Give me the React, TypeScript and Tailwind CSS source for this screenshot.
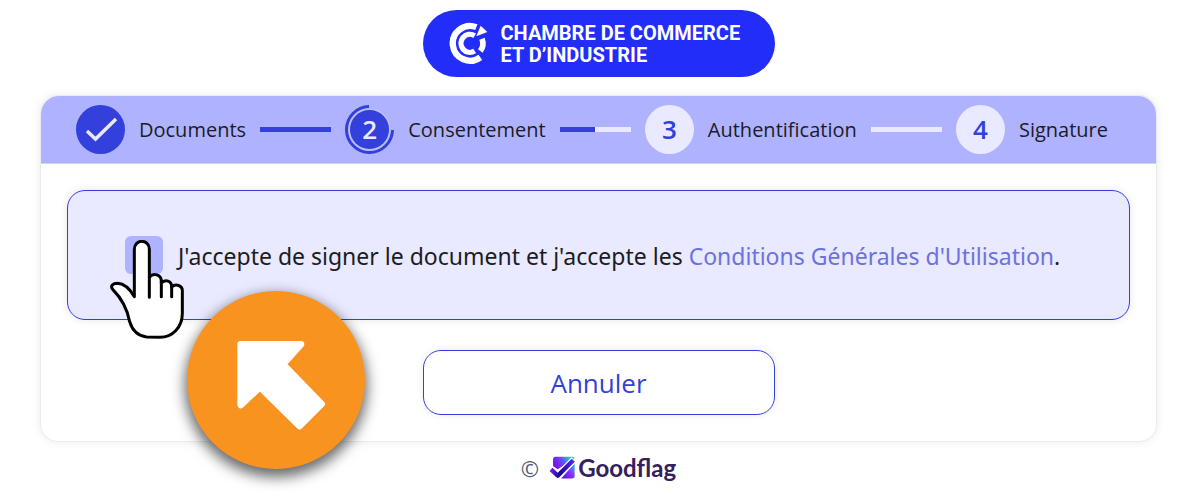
import React from "react";

function CciLogo() {
  return (
    <svg viewBox="9 0 120 144" className="h-12 w-10 shrink-0" aria-hidden="true">
      <g fill="none" stroke="#ffffff">
        <path d="M91 21.500A52 52 0 1 0 103 112" strokeWidth="19" />
        <path d="M86 47A27 27 0 1 0 86 93" strokeWidth="16" />
        <path d="M108 56A39 39 0 0 1 103 93" strokeWidth="17" />
      </g>
      <path d="M104 17L124 36L91 49Z" fill="#ffffff" />
    </svg>
  );
}

function GoodflagMark() {
  return (
    <svg viewBox="118 52 80 70" className="h-6 w-[27px] shrink-0" aria-hidden="true">
      <defs>
        <linearGradient id="flag" x1="0" y1="0.3" x2="1" y2="0">
          <stop offset="0" stopColor="#7a12ee" />
          <stop offset="0.4" stopColor="#6a4cf5" />
          <stop offset="0.8" stopColor="#16d3e0" />
        </linearGradient>
        <linearGradient id="flagEnd" x1="0" y1="1" x2="1" y2="0">
          <stop offset="0" stopColor="#4a18c8" />
          <stop offset="0.5" stopColor="#8a2cff" />
          <stop offset="1" stopColor="#20c8ee" />
        </linearGradient>
        <linearGradient id="tick" x1="0" y1="0" x2="1" y2="0">
          <stop offset="0" stopColor="#7417ee" />
          <stop offset="0.4" stopColor="#1a058c" />
          <stop offset="1" stopColor="#5a25ee" />
        </linearGradient>
      </defs>
      <path d="M138 54H188Q195 54 192 60L144 91L130 82V62Q130 54 138 54Z" fill="url(#flag)" />
      <path d="M194 72V110Q194 118 186 118H154Z" fill="url(#flagEnd)" />
      <path d="M124 91L144 110L192 62" fill="none" stroke="#ffffff" strokeWidth="20" />
      <path d="M124 91L144 110L190 64" fill="none" stroke="url(#tick)" strokeWidth="13" strokeLinejoin="round" />
    </svg>
  );
}

function PointingHand() {
  return (
    <svg viewBox="150 180 222 300" className="pointer-events-none absolute top-1 -left-[15px] h-[100px] w-[74px] max-w-none" aria-hidden="true">
      <path
        d="M223 350V208C223 176 268 176 268 208V292C280 278 304 282 304 304V309C316 297 335 302 335 321C347 310 367 316 367 332V400C367 442 338 472 300 472L260 471C232 468 216 448 209 425C202 387 184 354 158 328C150 318 158 310 173 310C194 311 209 326 223 350Z"
        fill="#ffffff"
        stroke="#000000"
        strokeWidth="9"
        strokeLinejoin="round"
      />
      <path d="M268 290V352M304 304V350M335 321V350" fill="none" stroke="#000000" strokeWidth="9" strokeLinecap="round" />
    </svg>
  );
}

function ArrowBadge() {
  return (
    <div className="pointer-events-none absolute top-[55px] left-[62px] size-[178px] rounded-full bg-[#f8931f] shadow-[0_6px_14px_2px_rgba(0,0,0,0.6)]">
      <svg viewBox="50 33 534 534" className="size-full" aria-hidden="true">
        <path
          d="M211 193H392L338 253L454 372L388 438L269 321L211 375Z"
          fill="#ffffff"
          stroke="#ffffff"
          strokeWidth="20"
          strokeLinejoin="round"
        />
      </svg>
    </div>
  );
}

function StepIcon({ step }: { step: number }) {
  if (step === 1) {
    return (
      <span className="flex size-[49px] shrink-0 items-center justify-center rounded-full bg-[#3340dc]">
        <svg viewBox="0 0 49 49" className="size-full" aria-hidden="true">
          <path d="M11 26L19.500 34L40 14" fill="none" stroke="#e9e9ff" strokeWidth="3.500" />
        </svg>
      </span>
    );
  }
  if (step === 2) {
    return (
      <span className="grid size-[49px] shrink-0 place-items-center">
        <svg viewBox="0 0 49 49" className="col-start-1 row-start-1 size-full" aria-hidden="true">
          <path d="M24 1.500A23 23 0 1 0 47.500 25" fill="none" stroke="#3340dc" strokeWidth="3" />
          <circle cx="24.500" cy="24.500" r="20.500" fill="none" stroke="#c4c6fd" strokeWidth="1" />
          <circle cx="24.500" cy="24.500" r="19.500" fill="#3340dc" />
        </svg>
        <span className="col-start-1 row-start-1 text-[26px] font-semibold text-[#e9e9ff]">2</span>
      </span>
    );
  }
  return (
    <span className="flex size-[49px] shrink-0 items-center justify-center rounded-full bg-[#e9e9ff] text-[26px] font-semibold text-[#3340dc]">
      {step}
    </span>
  );
}

const steps = ["Documents", "Consentement", "Authentification", "Signature"];

function Stepper() {
  return (
    <ol className="flex h-17 items-center gap-3.5 rounded-t-[18px] border-b border-[#d4d4dc] bg-[#afb3ff] pr-12 pl-[35px]">
      {steps.map((label, i) => (
        <React.Fragment key={label}>
          <li className="flex items-center gap-3.5" aria-current={i === 1 ? "step" : undefined}>
            <StepIcon step={i + 1} />
            <span className="text-xl">{label}</span>
          </li>
          {i < 3 && (
            <li className="flex h-[5px] flex-1" aria-hidden="true">
              <span className={i < 2 ? "flex-1 bg-[#3340dc]" : "flex-1 bg-[#e9e9ff]"} />
              <span className={i < 1 ? "flex-1 bg-[#3340dc]" : "flex-1 bg-[#e9e9ff]"} />
            </li>
          )}
        </React.Fragment>
      ))}
    </ol>
  );
}

export default function App() {
  return (
    <div className="bg-white px-10 pt-2.5 pb-5 font-['Open_Sans','Noto_Sans',sans-serif] text-[#1c1c22]">
      <header className="mx-auto flex h-[67px] w-88 items-center gap-3 rounded-full bg-[#232df8] pl-[26px]">
        <CciLogo />
        <p className="font-['Roboto','Noto_Sans',sans-serif] text-xl leading-[22px] font-bold whitespace-nowrap text-white">
          CHAMBRE DE COMMERCE
          <br />
          ET D’INDUSTRIE
        </p>
      </header>

      <main className="mt-[18px] rounded-[18px] border border-[#ececec] bg-white shadow-[0_0_10px_rgba(0,0,0,0.08)]">
        <Stepper />
        <div className="flex flex-col items-center gap-[30px] p-[26px]">
          <div className="flex h-[130px] w-full items-center gap-[15px] rounded-[18px] border border-[#3340dc] bg-[#e9e9ff] pl-[57px] shadow-[0_0_8px_rgba(0,0,0,0.1)]">
            <div className="relative z-10 size-[38px] shrink-0">
              <input id="consent" type="checkbox" className="block size-full appearance-none rounded-md bg-[#afb3ff]" />
              <PointingHand />
              <ArrowBadge />
            </div>
            <label htmlFor="consent" className="pt-0.5 font-['Noto_Sans','Open_Sans',sans-serif] text-[23px] whitespace-nowrap">
              J'accepte de signer le document et j'accepte les{" "}
              <a href="#conditions" className="text-[#6c72e0]">
                Conditions Générales d'Utilisation
              </a>
              .
            </label>
          </div>
          <button type="button" className="h-[65px] w-88 rounded-[18px] border border-[#3340dc] bg-white pt-0.5 text-[26px] text-[#3340dc] shadow-[0_0_8px_rgba(0,0,0,0.08)]">
            Annuler
          </button>
        </div>
      </main>

      <footer className="mt-3.5 flex items-center justify-center gap-2.5">
        <span className="text-[22px] leading-6 text-[#555b6e]">©</span>
        <span className="flex items-center gap-0.5">
          <GoodflagMark />
          <span className="font-['Lato','Open_Sans',sans-serif] text-2xl leading-6 font-bold text-[#33205f]">Goodflag</span>
        </span>
      </footer>
    </div>
  );
}
